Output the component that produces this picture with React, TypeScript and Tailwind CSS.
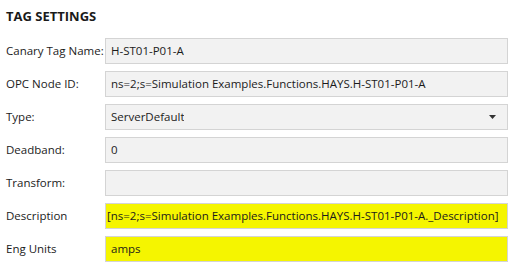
import { ReactNode } from "react";

type Row = {
  label: string;
  value: string;
  tone?: "plain" | "yellow";
  select?: boolean;
  tight?: boolean;
};

const rows: Row[] = [
  { label: "Canary Tag Name:", value: "H-ST01-P01-A" },
  { label: "OPC Node ID:", value: "ns=2;s=Simulation Examples.Functions.HAYS.H-ST01-P01-A" },
  { label: "Type:", value: "ServerDefault", select: true },
  { label: "Deadband:", value: "0" },
  { label: "Transform:", value: "" },
  {
    label: "Description",
    value: "[ns=2;s=Simulation Examples.Functions.HAYS.H-ST01-P01-A._Description]",
    tone: "yellow",
    tight: true,
  },
  { label: "Eng Units", value: "amps", tone: "yellow" },
];

function Field({ row }: { row: Row }) {
  const bg = row.tone === "yellow" ? "bg-[#f5f500]" : "bg-[#f2f2f2]";
  let inner: ReactNode = (
    <span className={`whitespace-nowrap overflow-hidden ${row.tight ? "pl-[1px]" : "pl-[5px]"}`}>
      {row.value}
    </span>
  );
  return (
    <div
      className={`flex h-[26px] min-w-0 flex-1 items-center border border-[#d4d4d4] ${bg} text-[11.5px] text-[#1b1b1b]`}
    >
      {inner}
      {row.select && (
        <svg width="7" height="4" viewBox="0 0 7 4" className="ml-auto mr-[11px] shrink-0">
          <path d="M0 0 H7 L3.5 4 Z" fill="#333" />
        </svg>
      )}
    </div>
  );
}

export default function App() {
  return (
    <div
      className="w-[512px] h-[269px] bg-white pl-[6px] pr-[4px]"
      style={{ fontFamily: '"Open Sans", "Noto Sans", sans-serif' }}
    >
      <h2 className="pt-[7px] h-[38px] text-[13px] font-bold leading-[18px] text-[#1a1a1a]">
        TAG SETTINGS
      </h2>
      <div className="flex flex-col gap-[7px]">
        {rows.map((row) => (
          <div key={row.label} className="flex items-center">
            <div className="w-[99px] shrink-0 text-[11.5px] text-[#1b1b1b]">{row.label}</div>
            <Field row={row} />
          </div>
        ))}
      </div>
    </div>
  );
}
